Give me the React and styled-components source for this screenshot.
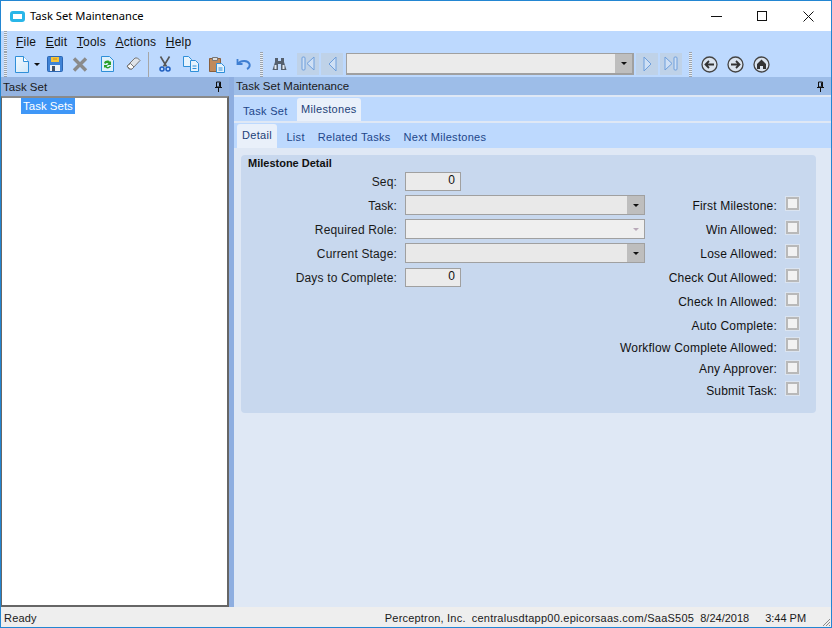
import React from 'react';
import styled, { createGlobalStyle } from 'styled-components';

const Global = createGlobalStyle`
  html, body { margin: 0; padding: 0; background: #fff; }
  * { box-sizing: border-box; }
  body { font-family: "Liberation Sans", Arial, sans-serif; font-size: 12px; color: #111; }
`;

const Window = styled.div`
  width: 832px;
  height: 628px;
  border: 1px solid #2386d2;
  display: flex;
  flex-direction: column;
  overflow: hidden;
`;

const TitleBar = styled.div`
  height: 30px;
  flex: none;
  background: #fff;
  display: flex;
  align-items: center;
  padding-left: 9px;
`;

const TitleText = styled.span`
  margin-left: 5px;
  margin-top: -2px;
  font-family: "Noto Sans", sans-serif;
  font-size: 11.2px;
  color: #000;
  flex: 1;
`;

const WinButton = styled.div`
  width: 46px;
  height: 30px;
  display: flex;
  align-items: center;
  justify-content: center;
`;

const Chrome = styled.div`
  background: #bdd9fe;
  flex: none;
  height: 46px;
  display: flex;
  flex-direction: column;
`;

const MenuBar = styled.div`
  height: 21px;
  display: flex;
  align-items: center;
`;

const Grip = styled.div`
  width: 3px;
  height: ${p => p.$h || 21}px;
  margin: ${p => p.$m || '0 9px 0 3px'};
  flex: none;
  background: repeating-linear-gradient(to bottom, #9aa3ad 0 1px, #e8eef6 1px 2px);
`;

const MenuItem = styled.span`
  margin-right: 9.6px;
  font-size: 12px;
  letter-spacing: 0.2px;
  color: #111;
  u { text-underline-offset: 1px; }
`;

const ToolBar = styled.div`
  height: 25px;
  padding-bottom: 1px;
  display: flex;
  align-items: center;
`;

const ToolIcon = styled.div`
  width: ${p => p.$w || 26}px;
  height: 22px;
  flex: none;
  margin-right: ${p => p.$mr || 0}px;
  display: flex;
  align-items: center;
  justify-content: center;
`;

const ToolSep = styled.div`
  width: 1px;
  height: 25px;
  flex: none;
  background: #a6a6a6;
  margin: 0 3px 0 3px;
`;

const NavButton = styled.div`
  width: 22px;
  height: 22px;
  flex: none;
  margin-right: 2px;
  background: #bfd2e8;
  display: flex;
  align-items: center;
  justify-content: center;
`;

const RecordCombo = styled.div`
  width: 288px;
  height: 22px;
  flex: none;
  margin: 0 2px 0 1px;
  border: 2px solid #a0a0a0;
  border-width: 1px 2px 2px 1px;
  background: #ebebeb;
  display: flex;
  justify-content: flex-end;
`;

const ComboArrow = styled.div`
  width: ${p => p.$w || 17}px;
  background: #bebebe;
  display: flex;
  align-items: center;
  justify-content: center;
  &::after {
    content: "";
    border-left: 3px solid transparent;
    border-right: 3px solid transparent;
    border-top: 3px solid #111;
  }
`;

const Main = styled.div`
  flex: 1;
  min-height: 0;
  display: flex;
`;

const LeftPanel = styled.div`
  width: 228px;
  flex: none;
  display: flex;
  flex-direction: column;
`;

const PanelHeader = styled.div`
  height: ${p => p.$h}px;
  flex: none;
  background: ${p => p.$bg};
  display: flex;
  align-items: center;
  justify-content: space-between;
  padding: 0 6px 0 ${p => p.$pl}px;
  font-size: 11.5px;
  color: #1a1a1a;
`;

const Tree = styled.div`
  flex: 1;
  display: flex;
  align-items: flex-start;
  background: #fff;
  border: 2px solid #666;
  border-top-color: #8a8a8a;
  border-left-width: 1px;
  padding: 0 0 0 19px;
`;

const TreeItem = styled.span`
  height: 16px;
  font-size: 11.5px;
  line-height: 16px;
  padding: 0 2px;
  background: #3f97f7;
  color: #fff;
`;

const Splitter = styled.div`
  width: 5px;
  flex: none;
  background: #8eaee0;
`;

const RightPanel = styled.div`
  flex: 1;
  min-width: 0;
  display: flex;
  flex-direction: column;
  background: #dfe8f5;
`;

const TabBand = styled.div`
  height: ${p => p.$h}px;
  flex: none;
  margin-top: 2px;
  background: #bdd9fe;
  display: flex;
  align-items: flex-end;
  padding-left: ${p => p.$pl}px;
`;

const Tab = styled.div`
  height: ${p => p.$active ? p.$ah : 21}px;
  padding: 0 ${p => p.$pad}px;
  margin-right: ${p => p.$mr || 0}px;
  display: flex;
  align-items: ${p => p.$active ? 'center' : 'flex-end'};
  padding-bottom: ${p => p.$active ? 2 : (p.$pb || 4)}px;
  font-size: 11px;
  letter-spacing: 0.3px;
  color: ${p => p.$active ? '#1c3f78' : '#21468a'};
  background: ${p => p.$active ? '#e9f0fa' : 'transparent'};
  border-radius: 3px 3px 0 0;
`;

const Content = styled.div`
  flex: 1;
  padding: 7px 15px 0 7px;
`;

const GroupBox = styled.div`
  height: 258px;
  background: #c8d8ee;
  border-radius: 4px;
  padding: 1px 17px 0 7px;
`;

const GroupTitle = styled.div`
  height: 13px;
  font-weight: bold;
  font-size: 11px;
  line-height: 15px;
  color: #111;
`;

const FormGrid = styled.div`
  display: flex;
  justify-content: space-between;
`;

const FieldColumn = styled.div`
  display: flex;
  flex-direction: column;
  margin-right: -60px;
`;

const FieldRow = styled.div`
  height: 24px;
  display: flex;
  align-items: center;
`;

const FieldLabel = styled.label`
  width: 149px;
  padding-top: 2px;
  text-align: right;
  margin-right: 8px;
  letter-spacing: 0.15px;
  color: #1a1a1a;
`;

const NumberBox = styled.div`
  width: 56px;
  height: 19px;
  border: 1px solid #a0a0a0;
  background: #ebebeb;
  text-align: right;
  padding-right: 5px;
  line-height: 15px;
`;

const Combo = styled.div`
  width: 240px;
  height: 20px;
  border: 1px solid #a0a0a0;
  background: ${p => p.$disabled ? '#efefef' : '#e9e9e9'};
  display: flex;
  justify-content: flex-end;
`;

const DisabledArrow = styled.div`
  width: 17px;
  display: flex;
  align-items: center;
  justify-content: center;
  &::after {
    content: "";
    border-left: 3px solid transparent;
    border-right: 3px solid transparent;
    border-top: 3px solid #b9a9b9;
  }
`;

const CheckColumn = styled.div`
  display: flex;
  flex-direction: column;
  margin-top: 24px;
`;

const CheckRow = styled.div`
  height: ${p => p.$h || 24}px;
  padding-top: 2px;
  display: flex;
  align-items: center;
  justify-content: flex-end;
  white-space: nowrap;
  letter-spacing: 0.2px;
`;

const CheckBox = styled.div`
  width: 13px;
  height: 13px;
  margin-left: 9px;
  flex: none;
  border: 2px solid #b9b9b9;
  background: #f2f2f2;
  box-shadow: 0 0 0 1px #dbe4f0;
  transform: translateY(${p => -(p.$up || 3)}px);
`;

const StatusBar = styled.div`
  height: 20px;
  flex: none;
  background: #eeeeee;
  display: flex;
  align-items: center;
  padding: 2px 3px 0;
  color: #1a1a1a;
  font-size: 11px;
  position: relative;
`;

const StatusCell = styled.span`
  margin-left: ${p => p.$ml || 0}px;
  letter-spacing: ${p => p.$ls || 0}px;
  white-space: nowrap;
`;

const ResizeGrip = styled.svg`
  position: absolute;
  right: 0;
  bottom: 0;
`;

const Pin = () => (
  <svg width="9" height="11" viewBox="0 0 9 11">
    <path d="M2.500 1h4v5h-4zM5.500 1.500v4M1 6.500h7M4.500 7v4" fill="none" stroke="#111" strokeWidth="1" />
  </svg>
);

const NewDoc = () => (
  <svg width="14" height="17" viewBox="0 0 14 17">
    <defs>
      <linearGradient id="docFill" x1="0" y1="0" x2="1" y2="1">
        <stop offset="0" stopColor="#f4fbff" />
        <stop offset="1" stopColor="#cfe6f8" />
      </linearGradient>
    </defs>
    <path d="M.5.500h8l5 5v11H.5z" fill="url(#docFill)" stroke="#2f8fd8" />
    <path d="M8.500.500v5h5" fill="#fff" stroke="#2f8fd8" />
  </svg>
);

const Floppy = () => (
  <svg width="16" height="16" viewBox="0 0 16 16">
    <rect x=".5" y=".5" width="15" height="15" rx="1" fill="#3f83d6" stroke="#2b66b4" />
    <path d="M4 1h8v5H4z" fill="#f6c53c" />
    <path d="M6 3h4" stroke="#c98f14" />
    <path d="M3 9h10v6H3z" fill="#eef2f8" />
    <path d="M5 10h3v5H5z" fill="#44546a" />
  </svg>
);

const DeleteX = () => (
  <svg width="16" height="15" viewBox="0 0 16 15">
    <path d="M2 1.500l12 12M14 1.500l-12 12" stroke="#8a8a8a" strokeWidth="3.400" />
  </svg>
);

const Refresh = () => (
  <svg width="13" height="16" viewBox="0 0 13 16">
    <path d="M.5.500h8l4 4v11H.5z" fill="#dff0fb" stroke="#2f8fd8" />
    <path d="M3 7c1-3 5-3 6-1l1-1v4H6l1.500-1.500C6.500 6.500 5 7 4.500 8z" fill="#2aa02a" />
    <path d="M10 10c-1 3-5 3-6 1l-1 1V9h4l-1.500 1.500c1 1 2.500.5 3-.5z" fill="#2aa02a" />
  </svg>
);

const Eraser = () => (
  <svg width="15" height="14" viewBox="0 0 15 14">
    <path d="M1 9l8-8h2.500L14 3.500 6 12H3z" fill="#dfe3e8" stroke="#777" />
    <path d="M1 9l3 3 2 0 2-2-3.500-3.500z" fill="#fafafa" stroke="#777" />
  </svg>
);

const Scissors = () => (
  <svg width="12" height="16" viewBox="0 0 12 16">
    <path d="M1.500.5l6 10M10.500.5l-6 10" stroke="#555" strokeWidth="1.600" />
    <circle cx="3" cy="13" r="2" fill="none" stroke="#1f5fc0" strokeWidth="1.500" />
    <circle cx="9" cy="13" r="2" fill="none" stroke="#1f5fc0" strokeWidth="1.500" />
  </svg>
);

const Copy = () => (
  <svg width="17" height="16" viewBox="0 0 17 16">
    <path d="M.5.500h5l3 3v7h-8z" fill="#e6f3fd" stroke="#2f8fd8" />
    <path d="M7.500 4.500h5l3 3v8h-8z" fill="#e6f3fd" stroke="#2f8fd8" />
    <path d="M9.500 10h4M9.500 12.500h4" stroke="#2f8fd8" />
  </svg>
);

const Paste = () => (
  <svg width="16" height="17" viewBox="0 0 16 17">
    <path d="M.5 2.500h11v13H.5z" fill="#c08a5c" stroke="#8a5f3c" />
    <path d="M3.500 1.500h5v3h-5z" fill="#ddd" stroke="#777" />
    <path d="M7.500 7.500h5l3 3v6h-8z" fill="#e6f3fd" stroke="#2f8fd8" />
    <path d="M9.500 12h4M9.500 14h4" stroke="#2f8fd8" />
  </svg>
);

const Undo = () => (
  <svg width="15" height="12" viewBox="0 0 15 12">
    <path d="M1.500 1v5h5" fill="none" stroke="#3f7fd2" strokeWidth="1.800" />
    <path d="M2 5.500C5 2 12 2 13.500 6c.5 2-.5 4-2.500 5" fill="none" stroke="#3f7fd2" strokeWidth="2" />
  </svg>
);

const Binoculars = () => (
  <svg width="15" height="14" viewBox="0 0 15 14">
    <path d="M3 1h3v3h3V1h3v4l2.500 8H9V7H6v6H.5L3 5z" fill="#55606e" />
    <path d="M2.500 8h2v4h-2zM10.500 8h2v4h-2z" fill="#dfe6ee" />
  </svg>
);

const navColor = '#6f9fdc';

const First = () => (
  <svg width="14" height="16" viewBox="0 0 14 16">
    <rect x="1" y="1" width="3" height="13" rx="1" fill="#cfe0f5" stroke={navColor} />
    <path d="M13 1v13L6 7.500z" fill="#cfe0f5" stroke={navColor} />
  </svg>
);
const Prev = () => (
  <svg width="9" height="16" viewBox="0 0 9 16">
    <path d="M8 1v14L1 8z" fill="#cfe0f5" stroke={navColor} />
  </svg>
);
const Next = () => (
  <svg width="9" height="16" viewBox="0 0 9 16">
    <path d="M1 1v14l7-7z" fill="#cfe0f5" stroke={navColor} />
  </svg>
);
const Last = () => (
  <svg width="14" height="16" viewBox="0 0 14 16">
    <path d="M1 1v13l7-6.500z" fill="#cfe0f5" stroke={navColor} />
    <rect x="10" y="1" width="3" height="13" rx="1" fill="#cfe0f5" stroke={navColor} />
  </svg>
);

const CircleIcon = ({ children }) => (
  <svg width="17" height="17" viewBox="0 0 17 17">
    <circle cx="8.500" cy="8.500" r="7.500" fill="#dbe4ef" stroke="#444" strokeWidth="1.300" />
    {children}
  </svg>
);

const checks = [
  ['First Milestone:'], ['Win Allowed:'], ['Lose Allowed:'], ['Check Out Allowed:'],
  ['Check In Allowed:'], ['Auto Complete:'], ['Workflow Complete Allowed:', 19, 3],
  ['Any Approver:', 24, 2], ['Submit Task:', 20, 3],
];

export default function App() {
  return (
    <Window>
      <Global />
      <TitleBar>
        <svg width="15" height="11" viewBox="0 0 15 11">
          <rect width="15" height="11" rx="3" fill="#29b6e8" />
          <rect x="3" y="3" width="9" height="5" fill="#fff" />
        </svg>
        <TitleText>Task Set Maintenance</TitleText>
        <WinButton>
          <svg width="11" height="11" viewBox="0 0 11 11"><path d="M0 5.500h11" stroke="#111" /></svg>
        </WinButton>
        <WinButton>
          <svg width="11" height="11" viewBox="0 0 11 11"><rect x=".5" y=".5" width="9" height="9" fill="none" stroke="#111" /></svg>
        </WinButton>
        <WinButton>
          <svg width="11" height="11" viewBox="0 0 11 11"><path d="M.5.500l10 10M10.500.500l-10 10" stroke="#111" /></svg>
        </WinButton>
      </TitleBar>
      <Chrome>
        <MenuBar>
          <Grip />
          <MenuItem><u>F</u>ile</MenuItem>
          <MenuItem><u>E</u>dit</MenuItem>
          <MenuItem><u>T</u>ools</MenuItem>
          <MenuItem><u>A</u>ctions</MenuItem>
          <MenuItem><u>H</u>elp</MenuItem>
        </MenuBar>
        <ToolBar>
          <Grip $h={25} $m="0 5px 0 3px" />
          <ToolIcon $w={20}><NewDoc /></ToolIcon>
          <ToolIcon $w={10}>
            <svg width="6" height="3" viewBox="0 0 6 3"><path d="M0 0h6L3 3z" fill="#111" /></svg>
          </ToolIcon>
          <ToolIcon $w={25}><Floppy /></ToolIcon>
          <ToolIcon $w={26}><DeleteX /></ToolIcon>
          <ToolIcon $w={28}><Refresh /></ToolIcon>
          <ToolIcon $w={24}><Eraser /></ToolIcon>
          <ToolSep />
          <ToolIcon $w={26}><Scissors /></ToolIcon>
          <ToolIcon $w={26}><Copy /></ToolIcon>
          <ToolIcon $w={26}><Paste /></ToolIcon>
          <ToolIcon $w={26}><Undo /></ToolIcon>
          <Grip $h={25} $m="0 3px 0 4px" />
          <ToolIcon $w={26} $mr={5}><Binoculars /></ToolIcon>
          <NavButton><First /></NavButton>
          <NavButton><Prev /></NavButton>
          <RecordCombo><ComboArrow /></RecordCombo>
          <NavButton><Next /></NavButton>
          <NavButton><Last /></NavButton>
          <Grip $h={25} $m="0 4px 0 5px" />
          <ToolIcon $w={26}>
            <CircleIcon><path d="M13 8.500H5M8 5L4.500 8.500 8 12" fill="none" stroke="#333" strokeWidth="1.800" /></CircleIcon>
          </ToolIcon>
          <ToolIcon $w={26}>
            <CircleIcon><path d="M4 8.500h8M9 5l3.500 3.500L9 12" fill="none" stroke="#333" strokeWidth="1.800" /></CircleIcon>
          </ToolIcon>
          <ToolIcon $w={26}>
            <CircleIcon><path d="M8.500 3.500L13 8v5H10v-3H7v3H4V8z" fill="#333" /></CircleIcon>
          </ToolIcon>
        </ToolBar>
      </Chrome>
      <Main>
        <LeftPanel>
          <PanelHeader $h={19} $bg="#94b3e0" $pl={2}>
            Task Set
            <Pin />
          </PanelHeader>
          <Tree><TreeItem>Task Sets</TreeItem></Tree>
        </LeftPanel>
        <Splitter />
        <RightPanel>
          <PanelHeader $h={18} $bg="#9dbde8" $pl={2}>
            Task Set Maintenance
            <Pin />
          </PanelHeader>
          <TabBand $h={24} $pl={2}>
            <Tab $pad={7} $mr={2}>Task Set</Tab>
            <Tab $active $ah={23} $pad={4.5}>Milestones</Tab>
          </TabBand>
          <TabBand $h={25} $pl={3}>
            <Tab $active $ah={24} $pad={5} $mr={3}>Detail</Tab>
            <Tab $pad={6.5} $pb={5}>List</Tab>
            <Tab $pad={6.5} $pb={5}>Related Tasks</Tab>
            <Tab $pad={6.5} $pb={5}>Next Milestones</Tab>
          </TabBand>
          <Content>
            <GroupBox>
              <GroupTitle>Milestone Detail</GroupTitle>
              <FormGrid>
                <FieldColumn>
                  <FieldRow><FieldLabel>Seq:</FieldLabel><NumberBox>0</NumberBox></FieldRow>
                  <FieldRow><FieldLabel>Task:</FieldLabel><Combo><ComboArrow /></Combo></FieldRow>
                  <FieldRow><FieldLabel>Required Role:</FieldLabel><Combo $disabled><DisabledArrow /></Combo></FieldRow>
                  <FieldRow><FieldLabel>Current Stage:</FieldLabel><Combo><ComboArrow /></Combo></FieldRow>
                  <FieldRow><FieldLabel>Days to Complete:</FieldLabel><NumberBox>0</NumberBox></FieldRow>
                </FieldColumn>
                <CheckColumn>
                  {checks.map(([label, h, up]) => (
                    <CheckRow key={label} $h={h}>{label}<CheckBox $up={up} /></CheckRow>
                  ))}
                </CheckColumn>
              </FormGrid>
            </GroupBox>
          </Content>
        </RightPanel>
      </Main>
      <StatusBar>
        <StatusCell $ls={0.2}>Ready</StatusCell>
        <StatusCell $ml={348} $ls={0.2}>Perceptron, Inc.</StatusCell>
        <StatusCell $ml={6} $ls={0.25}>centralusdtapp00.epicorsaas.com/SaaS505</StatusCell>
        <StatusCell $ml={6}>8/24/2018</StatusCell>
        <StatusCell $ml={16}>3:44 PM</StatusCell>
        <ResizeGrip width="10" height="10" viewBox="0 0 10 10">
          <path d="M9 2L2 9M9 5L5 9M9 8L8 9" stroke="#8a8a8a" />
        </ResizeGrip>
      </StatusBar>
    </Window>
  );
}
